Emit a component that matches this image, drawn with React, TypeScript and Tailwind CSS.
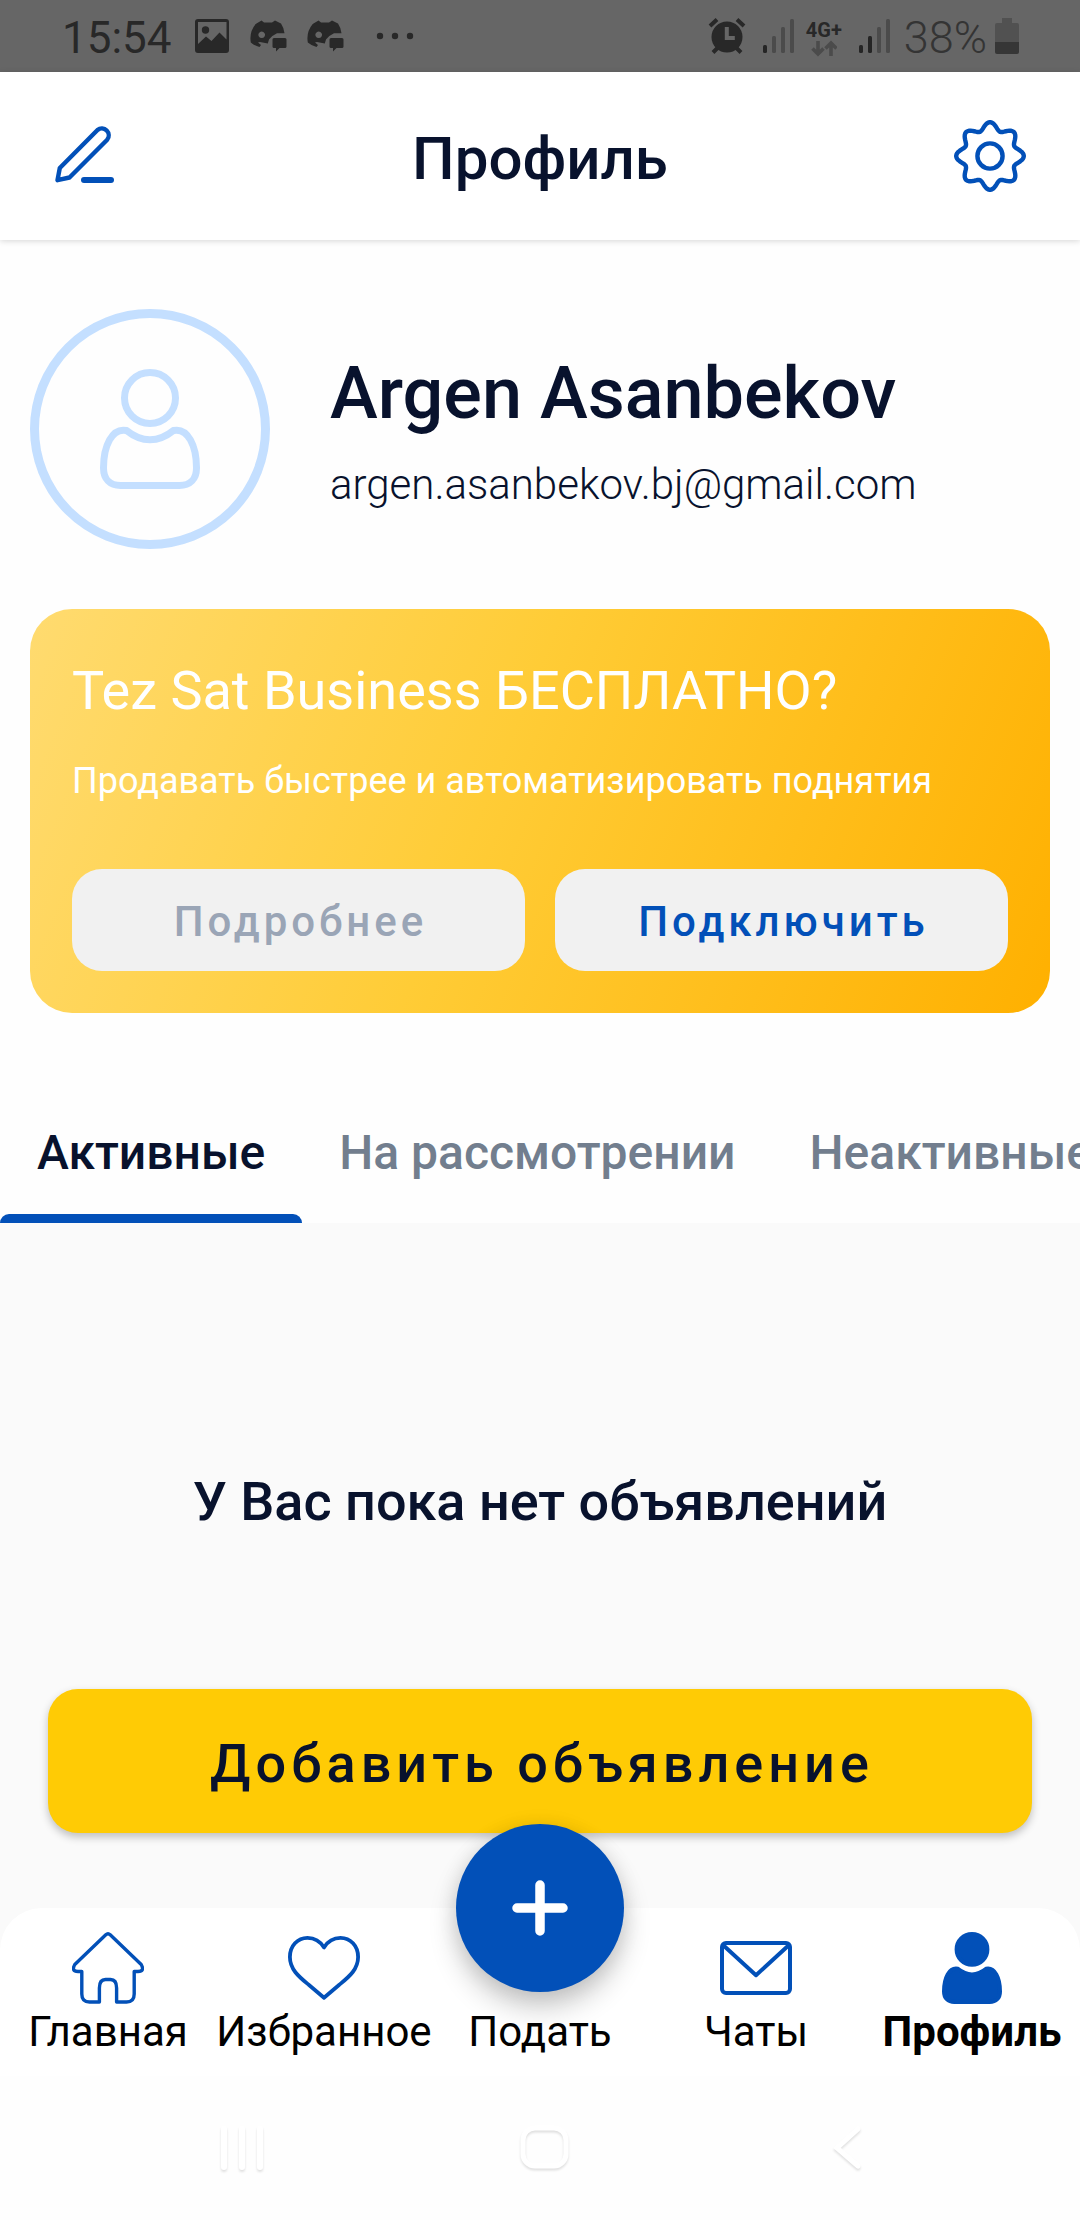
import type { ReactNode } from "react";

type IconProps = { className?: string };

/* ---------- status bar glyphs ---------- */

function ImageIcon() {
  return (
    <svg viewBox="0 0 36 36" className="size-9" aria-hidden="true">
      <path
        fill="currentColor"
        fillRule="evenodd"
        d="M4 1h28a3 3 0 0 1 3 3v28a3 3 0 0 1-3 3H4a3 3 0 0 1-3-3V4a3 3 0 0 1 3-3Zm0 3v22l8-7.500 5.500 4.500 8-8.500 7 7V4Z"
      />
      <circle cx="11.500" cy="12" r="3.700" fill="currentColor" />
    </svg>
  );
}

function DiscordChatIcon() {
  return (
    <svg viewBox="0 0 37 32" className="h-8 w-[37px]" aria-hidden="true">
      <path
        fill="currentColor"
        fillRule="evenodd"
        d="M5.700 4 11.500.5 14 2.500H22L25 .5 31 3.500Q34 8 34.500 13.300H27Q22 15.500 19 19.500L17.800 23.500 10 22 8 22.500 11 25 9.500 27Q5 26 .8 22.500Q-1 12 5.700 4ZM11.700 11.500a3.300 3.300 0 1 0 .01 0Z"
      />
      <path
        fill="currentColor"
        d="M24 18h11a1.500 1.500 0 0 1 1.500 1.500v7A1.500 1.500 0 0 1 35 28h-5.500L26 31.500V28h-2a1.500 1.500 0 0 1-1.500-1.500v-7A1.500 1.500 0 0 1 24 18Z"
      />
    </svg>
  );
}

function AlarmIcon() {
  return (
    <svg viewBox="0 0 38 38" className="size-[38px]" aria-hidden="true">
      <g stroke="currentColor" strokeWidth="4">
        <path d="M2 9 9 2.500M36 9 29 2.500M5 35.500l5-5M33 35.500l-5-5" />
      </g>
      <circle cx="19" cy="20" r="15.500" fill="currentColor" />
      <path d="M18.800 10v11h8" fill="none" stroke="#666" strokeWidth="4" />
    </svg>
  );
}

function SignalIcon({ level }: { level: number }) {
  return (
    <svg viewBox="0 0 32 36" className="h-9 w-8" aria-hidden="true">
      {[8, 17, 26, 34].map((h, i) => (
        <rect key={h} x={1 + i * 9} y={35 - h} width="4" height={h} rx="1.500" fill={i < level ? "#252525" : "#4b4b4b"} />
      ))}
    </svg>
  );
}

function DataArrowsIcon() {
  return (
    <svg viewBox="0 0 26 17" className="h-[17px] w-[26px]" fill="none" stroke="#4b4b4b" strokeWidth="3.600" aria-hidden="true">
      <path d="M7 1v13M1.500 8.500 7 14l5.500-5.500M20 16V3M14.500 8.500 20 3l5.500 5.500" />
    </svg>
  );
}

function BatteryIcon() {
  return (
    <svg viewBox="0 0 24 36" className="h-9 w-6" aria-hidden="true">
      <path d="M7 0h10v5h5a2 2 0 0 1 2 2v17H0V7a2 2 0 0 1 2-2h5Z" fill="#515151" />
      <path d="M0 24h24v10a2 2 0 0 1-2 2H2a2 2 0 0 1-2-2Z" fill="#363636" />
    </svg>
  );
}

/* ---------- app icons ---------- */

function PencilIcon() {
  return (
    <svg viewBox="0 0 60 60" className="size-[60px]" fill="none" stroke="currentColor" strokeLinejoin="round" strokeLinecap="round" aria-hidden="true">
      <path strokeWidth="4.400" d="M5.800 42 43.500 4a6.900 6.900 0 0 1 9.700 9.700L15.500 51.500 3.500 54.200Z" />
      <path strokeWidth="6" d="M30 54h27" />
    </svg>
  );
}

const GEAR_PATH =
  Array.from({ length: 144 }, (_, i) => {
    const a = (i / 144) * Math.PI * 2;
    const r = 30 + 3.8 * Math.cos(8 * a);
    return `${i ? "L" : "M"}${(36 + r * Math.sin(a)).toFixed(2)} ${(36 - r * Math.cos(a)).toFixed(2)}`;
  }).join("") + "Z";

function GearIcon() {
  return (
    <svg viewBox="0 0 72 72" className="size-[72px]" fill="none" stroke="currentColor" strokeWidth="4.400" strokeLinejoin="round" aria-hidden="true">
      <path d={GEAR_PATH} />
      <circle cx="36" cy="36" r="12.600" />
    </svg>
  );
}

function PersonIcon({ className, filled }: IconProps & { filled?: boolean }) {
  return (
    <svg viewBox="0 0 120 120" className={className} fill={filled ? "currentColor" : "none"} stroke="currentColor" strokeWidth="7" strokeLinejoin="round" aria-hidden="true">
      <circle cx="60" cy="29" r="25.500" />
      <path d="M36.500 61.500C22 58.500 13.500 77 13.500 99C13.500 110 20 116.500 30.500 116.500H89.500C100 116.500 106.500 110 106.500 99C106.500 77 98 58.500 83.500 61.500Q72 70.800 60 70.800Q48 70.800 36.500 61.500Z" />
    </svg>
  );
}

function HomeIcon() {
  return (
    <svg viewBox="0 0 72 72" className="size-[72px]" fill="none" stroke="currentColor" strokeWidth="3.400" strokeLinejoin="round" aria-hidden="true">
      <path d="M38.200 2.800 69.200 32.500Q73 39.500 66 39.500H62.200V62Q62.200 70 54.500 70H44.600V56Q44.600 47.500 38.500 47.500H33.500Q27.400 47.500 27.400 56V70H17.500Q9.800 70 9.800 62V39.500H6Q-1 39.500 2.800 32.500L33.800 2.800Q36 .8 38.200 2.800Z" />
    </svg>
  );
}

function HeartIcon() {
  return (
    <svg viewBox="0 0 72 72" className="size-[72px]" fill="none" stroke="currentColor" strokeWidth="3.800" strokeLinejoin="round" aria-hidden="true">
      <path d="M36 15.500C32 9 26 5.900 19.500 5.900C9.500 5.900 1.900 14 1.900 25C1.900 38 12 45.500 21 53L36 65.800L51 53C60 45.500 70.100 38 70.100 25C70.100 14 62.500 5.900 52.500 5.900C46 5.900 40 9 36 15.500Z" />
    </svg>
  );
}

function MailIcon() {
  return (
    <svg viewBox="0 0 72 72" className="size-[72px]" fill="none" stroke="currentColor" strokeWidth="4" strokeLinejoin="round" aria-hidden="true">
      <rect x="2" y="11" width="68" height="50" rx="4" />
      <path d="M3 13 36 43.200 69 13" />
    </svg>
  );
}

/* ---------- page parts ---------- */

function StatusBar() {
  return (
    <div className="flex h-[72px] items-center justify-between bg-[#666] pr-[61px] pl-[62px] text-[#282828]">
      <div className="flex items-center">
        <span className="pt-1 text-[44px] leading-[52px]">15:54</span>
        <span className="ml-[22px] flex items-center gap-5">
          <ImageIcon />
          <DiscordChatIcon />
          <DiscordChatIcon />
        </span>
        <svg viewBox="0 0 38 8" className="ml-8 h-2 w-[38px]" fill="currentColor" aria-hidden="true">
          <circle cx="4" cy="4" r="3.200" />
          <circle cx="19" cy="4" r="3.200" />
          <circle cx="34" cy="4" r="3.200" />
        </svg>
      </div>
      <div className="flex items-center">
        <AlarmIcon />
        <span className="ml-4">
          <SignalIcon level={1} />
        </span>
        <span className="ml-3 flex flex-col items-center pt-1">
          <span className="text-[20px] leading-5 font-bold">4G+</span>
          <DataArrowsIcon />
        </span>
        <span className="ml-4">
          <SignalIcon level={2} />
        </span>
        <span className="ml-3.5 pt-1 text-[45px] leading-[52px] font-light text-[#343434]">38%</span>
        <span className="ml-2">
          <BatteryIcon />
        </span>
      </div>
    </div>
  );
}

function Header() {
  return (
    <header className="relative z-10 flex h-[168px] items-center justify-between bg-white px-[54px] shadow-[0_1px_6px_rgba(0,0,0,0.16)]">
      <button type="button" aria-label="Редактировать" className="w-[72px] text-[#0250b8]">
        <PencilIcon />
      </button>
      <h1 className="pt-1.5 text-[60px] leading-[70px] font-medium">Профиль</h1>
      <button type="button" aria-label="Настройки" className="text-[#0250b8]">
        <GearIcon />
      </button>
    </header>
  );
}

function ProfileInfo() {
  return (
    <section className="flex items-center gap-[60px] px-[30px] pt-[69px]">
      <div className="flex size-[240px] shrink-0 items-center justify-center rounded-full border-[9px] border-[#c4dfff] text-[#c4dfff]">
        <PersonIcon className="size-[120px]" />
      </div>
      <div className="flex flex-col gap-6 pt-1">
        <h2 className="text-[72px] leading-[84px] font-medium">Argen Asanbekov</h2>
        <p className="text-[42px] leading-[50px] font-light">argen.asanbekov.bj@gmail.com</p>
      </div>
    </section>
  );
}

function BusinessCard() {
  return (
    <section className="mx-[30px] mt-[60px] rounded-[42px] bg-[linear-gradient(112deg,#ffdb70,#ffcc36_45%,#ffb000)] p-[42px] text-white">
      <h3 className="text-[54px] leading-[80px]">Tez Sat Business БЕСПЛАТНО?</h3>
      <p className="mt-7 text-[36px] leading-[44px]">Продавать быстрее и автоматизировать поднятия</p>
      <div className="mt-[66px] grid grid-cols-2 gap-[30px]">
        <button type="button" className="h-[102px] rounded-[30px] bg-[#f1f1f1] pt-0.5 pl-1 text-[42px] font-medium tracking-[4px] text-[#9aa5b6]">
          Подробнее
        </button>
        <button type="button" className="h-[102px] rounded-[30px] bg-[#f1f1f1] pt-0.5 pl-1 text-[42px] font-medium tracking-[4px] text-[#0250b8]">
          Подключить
        </button>
      </div>
    </section>
  );
}

const TABS = ["Активные", "На рассмотрении", "Неактивные"];

function Tabs() {
  return (
    <div role="tablist" className="mt-[69px] flex overflow-hidden">
      {TABS.map((tab, i) => (
        <button
          key={tab}
          type="button"
          role="tab"
          aria-selected={i === 0}
          className={
            i === 0
              ? "relative h-[141px] shrink-0 px-[37px] text-[48px] font-medium whitespace-nowrap after:absolute after:inset-x-0 after:bottom-0 after:h-[9px] after:rounded-t-[9px] after:bg-[#0250b8]"
              : "h-[141px] shrink-0 px-[37px] text-[48px] font-medium whitespace-nowrap text-[#727e8e]"
          }
        >
          {tab}
        </button>
      ))}
    </div>
  );
}

function NavItem({ label, icon, active }: { label: string; icon?: ReactNode; active?: boolean }) {
  return (
    <a
      href="#"
      aria-current={active ? "page" : undefined}
      className={
        active
          ? "flex flex-col items-center gap-[3px] text-[42px] leading-[50px] font-bold text-black"
          : "flex flex-col items-center gap-[3px] text-[42px] leading-[50px] text-black"
      }
    >
      <span className="flex h-[72px] items-center text-[#0250b8]">{icon}</span>
      {label}
    </a>
  );
}

function BottomNav() {
  return (
    <nav className="relative grid h-[168px] grid-cols-5 rounded-t-[42px] bg-white pt-6">
      <button
        type="button"
        aria-label="Подать объявление"
        className="absolute -top-[84px] left-1/2 flex size-[168px] -translate-x-1/2 items-center justify-center rounded-full bg-[#0250b8] shadow-[0_16px_28px_rgba(0,0,0,0.2),0_2px_20px_rgba(0,0,0,0.1)]"
      >
        <svg viewBox="0 0 56 56" className="size-14" stroke="#fff" strokeWidth="9.500" strokeLinecap="round" aria-hidden="true">
          <path d="M5 28h46M28 5v46" />
        </svg>
      </button>
      <NavItem label="Главная" icon={<HomeIcon />} />
      <NavItem label="Избранное" icon={<HeartIcon />} />
      <NavItem label="Подать" />
      <NavItem label="Чаты" icon={<MailIcon />} />
      <NavItem label="Профиль" icon={<PersonIcon className="size-[72px]" filled />} active />
    </nav>
  );
}

function SystemNav() {
  return (
    <div className="flex h-[144px] items-center justify-between bg-[#fefefe] px-[216px]">
      <button type="button" aria-label="Недавние приложения">
        <svg viewBox="0 0 52 52" className="size-[52px] drop-shadow-[0_2px_1px_rgba(0,0,0,0.12)]" stroke="#fff" strokeWidth="6" strokeLinecap="round" aria-hidden="true">
          <path d="M8 7v38M26 7v38M44 7v38" />
        </svg>
      </button>
      <button type="button" aria-label="Домой" className="pl-2">
        <svg viewBox="0 0 52 52" className="size-[52px] drop-shadow-[0_2px_1px_rgba(0,0,0,0.12)]" fill="none" stroke="#fff" strokeWidth="5" aria-hidden="true">
          <rect x="5" y="6" width="43" height="38" rx="12" />
        </svg>
      </button>
      <button type="button" aria-label="Назад">
        <svg viewBox="0 0 52 52" className="size-[52px] drop-shadow-[0_2px_1px_rgba(0,0,0,0.12)]" fill="none" stroke="#fff" strokeWidth="5" strokeLinecap="round" aria-hidden="true">
          <path d="M46 7 25 26l21 18" />
        </svg>
      </button>
    </div>
  );
}

export default function App() {
  return (
    <div className="flex min-h-screen flex-col bg-[#fafafa] font-['Roboto',sans-serif] text-[#08122d]">
      <StatusBar />
      <Header />
      <div className="bg-[#fefefe]">
        <ProfileInfo />
        <BusinessCard />
        <Tabs />
      </div>
      <main className="flex flex-1 flex-col px-12 pt-[247px] pb-[75px]">
        <p className="text-center text-[54px] leading-[64px] font-medium">У Вас пока нет объявлений</p>
        <button
          type="button"
          className="mt-[155px] h-36 rounded-[30px] bg-[#ffcb05] pt-1 pl-1 text-[54px] font-medium tracking-[5px] shadow-[0_4px_8px_rgba(0,0,0,0.24)]"
        >
          Добавить объявление
        </button>
      </main>
      <BottomNav />
      <SystemNav />
    </div>
  );
}
